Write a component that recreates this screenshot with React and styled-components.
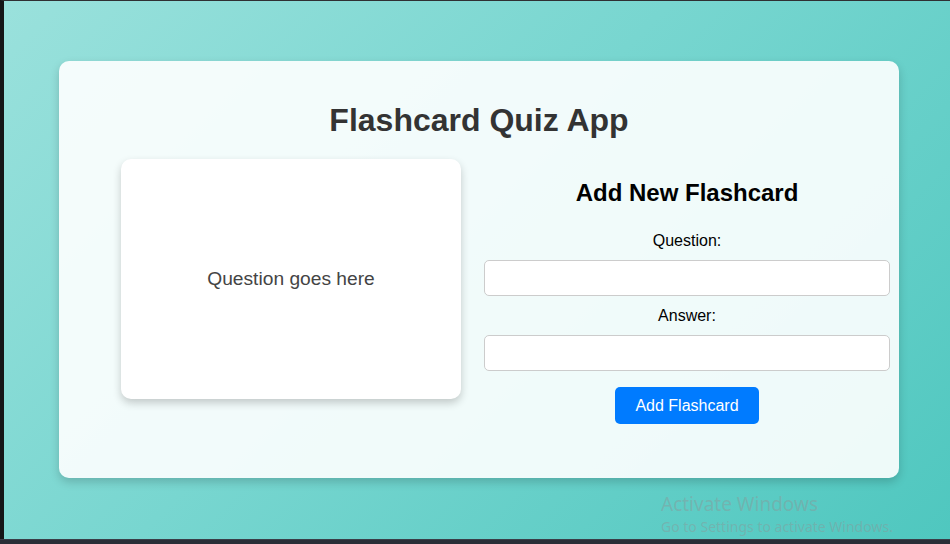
import React from "react";
import styled, { createGlobalStyle } from "styled-components";

const GlobalStyle = createGlobalStyle`
    html, body {
        margin: 0;
        padding: 0;
        background: #2a2d35;
        font-family: "Liberation Sans", Arial, sans-serif;
    }
    * {
        box-sizing: border-box;
    }
`;

const Frame = styled.div`
    width: 950px;
    height: 544px;
    display: flex;
    flex-direction: column;
    overflow: hidden;
`;

const Screen = styled.div`
    position: relative;
    height: 539px;
    border-left: 4px solid #151617;
    border-top: 1px solid #2f3033;
    background: linear-gradient(135deg, #9ae1dc 0%, #78d6d0 45%, #4fc7bf 100%);
    padding: 60px 0 0 55px;
`;

const Taskbar = styled.div`
    flex: 1;
    background: #2a2e37;
    border-top: 1px solid #3a3e48;
`;

const Container = styled.div`
    width: 840px;
    height: 417px;
    padding: 20px 9px;
    border-radius: 10px;
    background: rgba(255, 255, 255, 0.9);
    box-shadow: 0 4px 10px rgba(0, 0, 0, 0.18);
`;

const Title = styled.h1`
    margin: 21px 0 20px;
    font-size: 32px;
    font-weight: 700;
    color: #333;
    text-align: center;
`;

const Content = styled.div`
    display: flex;
    align-items: flex-start;
    gap: 23px;
    padding-left: 53px;
`;

const Flashcard = styled.div`
    width: 340px;
    height: 240px;
    flex-shrink: 0;
    display: flex;
    align-items: center;
    justify-content: center;
    background: #fff;
    border-radius: 10px;
    box-shadow: 0 4px 8px rgba(0, 0, 0, 0.2);
    font-size: 19.2px;
    color: #444;
`;

const Form = styled.form`
    flex: 1;
    text-align: center;
`;

const FormTitle = styled.h2`
    margin: 20px 0 25px;
    font-size: 24px;
    font-weight: 700;
    color: #000;
`;

const Label = styled.label`
    display: block;
    margin: 0 0 10px;
    font-size: 16px;
    color: #000;
`;

const Input = styled.input`
    display: block;
    width: 100%;
    height: 36px;
    margin: 0 0 11px;
    padding: 8px;
    border: 1px solid #ccc;
    border-radius: 5px;
    background: #fff;
    font-size: 16px;
    font-family: inherit;
`;

const Button = styled.button`
    display: block;
    margin: 16px auto 0;
    height: 37px;
    padding: 0 20px;
    border: none;
    border-radius: 5px;
    background: #007bff;
    color: #fff;
    font-size: 16px;
    font-family: inherit;
    cursor: pointer;
`;

const Watermark = styled.div`
    position: absolute;
    left: 657px;
    top: 492px;
    color: rgba(140, 150, 150, 0.45);
    font-family: "Noto Sans", "Open Sans", sans-serif;
    line-height: 1.25;
    pointer-events: none;

    .big {
        font-size: 19px;
    }
    .small {
        font-size: 14px;
        margin-top: 1px;
    }
`;

export default function App() {
    return (
        <Frame>
            <GlobalStyle />
            <Screen>
                <Container>
                    <Title>Flashcard Quiz App</Title>
                    <Content>
                        <Flashcard>Question goes here</Flashcard>
                        <Form onSubmit={(e) => e.preventDefault()}>
                            <FormTitle>Add New Flashcard</FormTitle>
                            <Label htmlFor="question">Question:</Label>
                            <Input id="question" type="text" />
                            <Label htmlFor="answer">Answer:</Label>
                            <Input id="answer" type="text" />
                            <Button type="submit">Add Flashcard</Button>
                        </Form>
                    </Content>
                </Container>
                <Watermark>
                    <div className="big">Activate Windows</div>
                    <div className="small">Go to Settings to activate Windows.</div>
                </Watermark>
            </Screen>
            <Taskbar />
        </Frame>
    );
}
